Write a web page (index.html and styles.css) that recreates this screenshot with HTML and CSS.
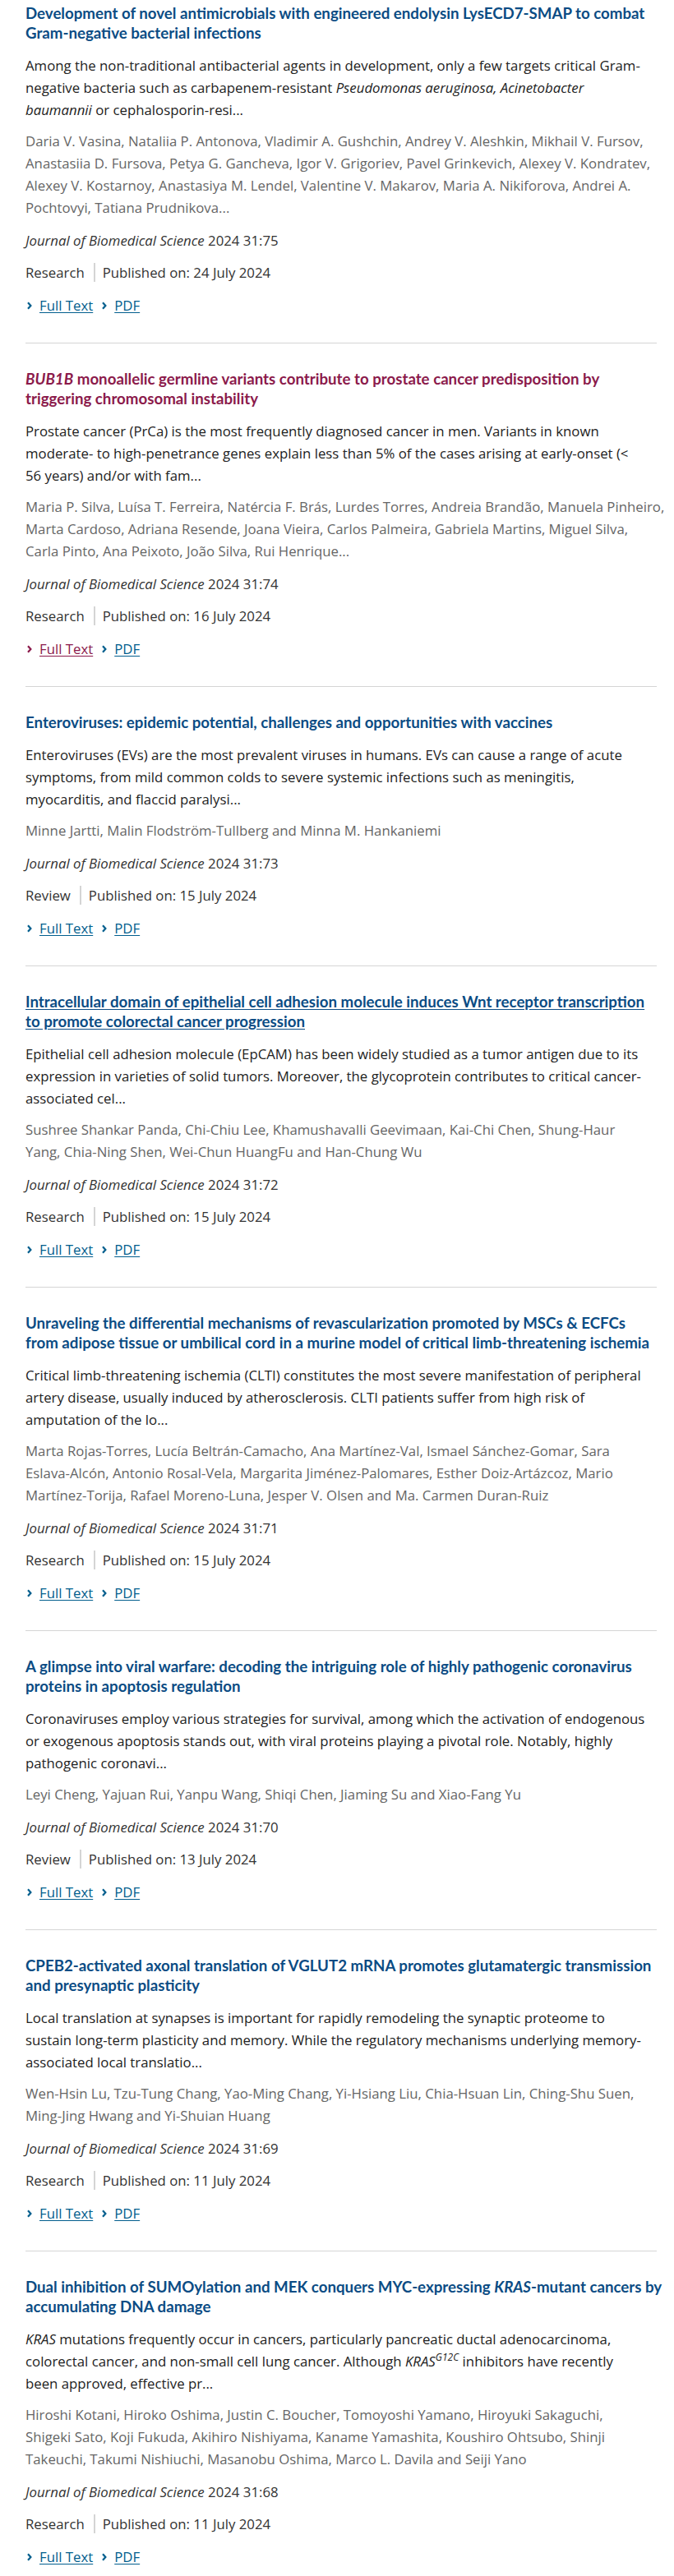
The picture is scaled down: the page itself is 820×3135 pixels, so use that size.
FILE: index.html
```html
<!DOCTYPE html>
<html lang="en">
<head>
<meta charset="utf-8">
<title>Articles</title>
<link rel="stylesheet" href="styles.css">
</head>
<body>
<ol class="results">
  <li class="item">
    <h3 class="title"><a href="#">Development of novel antimicrobials with engineered endolysin LysECD7-SMAP to combat<br>Gram-negative bacterial infections</a></h3>
    <p class="abstract">Among the non-traditional antibacterial agents in development, only a few targets critical Gram-<br>negative bacteria such as carbapenem-resistant <i>Pseudomonas aeruginosa, Acinetobacter<br>baumannii</i> or cephalosporin-resi...</p>
    <p class="authors">Daria V. Vasina, Nataliia P. Antonova, Vladimir A. Gushchin, Andrey V. Aleshkin, Mikhail V. Fursov,<br>Anastasiia D. Fursova, Petya G. Gancheva, Igor V. Grigoriev, Pavel Grinkevich, Alexey V. Kondratev,<br>Alexey V. Kostarnoy, Anastasiya M. Lendel, Valentine V. Makarov, Maria A. Nikiforova, Andrei A.<br>Pochtovyi, Tatiana Prudnikova...</p>
    <p class="journal"><i>Journal of Biomedical Science</i> 2024 31:75</p>
    <div class="meta"><span class="type">Research</span><span class="sep"></span><span class="date">Published on: 24 July 2024</span></div>
    <div class="links">
      <a class="link" href="#"><svg viewBox="0 0 9 10" width="9" height="10"><path d="M3 1.2 6.4 5 3 8.8"/></svg><span>Full Text</span></a>
      <a class="link" href="#"><svg viewBox="0 0 9 10" width="9" height="10"><path d="M3 1.2 6.4 5 3 8.8"/></svg><span>PDF</span></a>
    </div>
  </li>
  <li class="item">
    <h3 class="title"><a class="visited" href="#"><i>BUB1B</i> monoallelic germline variants contribute to prostate cancer predisposition by<br>triggering chromosomal instability</a></h3>
    <p class="abstract">Prostate cancer (PrCa) is the most frequently diagnosed cancer in men. Variants in known<br>moderate- to high-penetrance genes explain less than 5% of the cases arising at early-onset (&lt;<br>56 years) and/or with fam...</p>
    <p class="authors">Maria P. Silva, Luísa T. Ferreira, Natércia F. Brás, Lurdes Torres, Andreia Brandão, Manuela Pinheiro,<br>Marta Cardoso, Adriana Resende, Joana Vieira, Carlos Palmeira, Gabriela Martins, Miguel Silva,<br>Carla Pinto, Ana Peixoto, João Silva, Rui Henrique...</p>
    <p class="journal"><i>Journal of Biomedical Science</i> 2024 31:74</p>
    <div class="meta"><span class="type">Research</span><span class="sep"></span><span class="date">Published on: 16 July 2024</span></div>
    <div class="links">
      <a class="link visited" href="#"><svg viewBox="0 0 9 10" width="9" height="10"><path d="M3 1.2 6.4 5 3 8.8"/></svg><span>Full Text</span></a>
      <a class="link" href="#"><svg viewBox="0 0 9 10" width="9" height="10"><path d="M3 1.2 6.4 5 3 8.8"/></svg><span>PDF</span></a>
    </div>
  </li>
  <li class="item">
    <h3 class="title"><a href="#">Enteroviruses: epidemic potential, challenges and opportunities with vaccines</a></h3>
    <p class="abstract">Enteroviruses (EVs) are the most prevalent viruses in humans. EVs can cause a range of acute<br>symptoms, from mild common colds to severe systemic infections such as meningitis,<br>myocarditis, and flaccid paralysi...</p>
    <p class="authors">Minne Jartti, Malin Flodström-Tullberg and Minna M. Hankaniemi</p>
    <p class="journal"><i>Journal of Biomedical Science</i> 2024 31:73</p>
    <div class="meta"><span class="type">Review</span><span class="sep"></span><span class="date">Published on: 15 July 2024</span></div>
    <div class="links">
      <a class="link" href="#"><svg viewBox="0 0 9 10" width="9" height="10"><path d="M3 1.2 6.4 5 3 8.8"/></svg><span>Full Text</span></a>
      <a class="link" href="#"><svg viewBox="0 0 9 10" width="9" height="10"><path d="M3 1.2 6.4 5 3 8.8"/></svg><span>PDF</span></a>
    </div>
  </li>
  <li class="item">
    <h3 class="title"><a class="hover" href="#">Intracellular domain of epithelial cell adhesion molecule induces Wnt receptor transcription<br>to promote colorectal cancer progression</a></h3>
    <p class="abstract">Epithelial cell adhesion molecule (EpCAM) has been widely studied as a tumor antigen due to its<br>expression in varieties of solid tumors. Moreover, the glycoprotein contributes to critical cancer-<br>associated cel...</p>
    <p class="authors">Sushree Shankar Panda, Chi-Chiu Lee, Khamushavalli Geevimaan, Kai-Chi Chen, Shung-Haur<br>Yang, Chia-Ning Shen, Wei-Chun HuangFu and Han-Chung Wu</p>
    <p class="journal"><i>Journal of Biomedical Science</i> 2024 31:72</p>
    <div class="meta"><span class="type">Research</span><span class="sep"></span><span class="date">Published on: 15 July 2024</span></div>
    <div class="links">
      <a class="link" href="#"><svg viewBox="0 0 9 10" width="9" height="10"><path d="M3 1.2 6.4 5 3 8.8"/></svg><span>Full Text</span></a>
      <a class="link" href="#"><svg viewBox="0 0 9 10" width="9" height="10"><path d="M3 1.2 6.4 5 3 8.8"/></svg><span>PDF</span></a>
    </div>
  </li>
  <li class="item">
    <h3 class="title"><a href="#">Unraveling the differential mechanisms of revascularization promoted by MSCs &amp; ECFCs<br>from adipose tissue or umbilical cord in a murine model of critical limb-threatening ischemia</a></h3>
    <p class="abstract">Critical limb-threatening ischemia (CLTI) constitutes the most severe manifestation of peripheral<br>artery disease, usually induced by atherosclerosis. CLTI patients suffer from high risk of<br>amputation of the lo...</p>
    <p class="authors">Marta Rojas-Torres, Lucía Beltrán-Camacho, Ana Martínez-Val, Ismael Sánchez-Gomar, Sara<br>Eslava-Alcón, Antonio Rosal-Vela, Margarita Jiménez-Palomares, Esther Doiz-Artázcoz, Mario<br>Martínez-Torija, Rafael Moreno-Luna, Jesper V. Olsen and Ma. Carmen Duran-Ruiz</p>
    <p class="journal"><i>Journal of Biomedical Science</i> 2024 31:71</p>
    <div class="meta"><span class="type">Research</span><span class="sep"></span><span class="date">Published on: 15 July 2024</span></div>
    <div class="links">
      <a class="link" href="#"><svg viewBox="0 0 9 10" width="9" height="10"><path d="M3 1.2 6.4 5 3 8.8"/></svg><span>Full Text</span></a>
      <a class="link" href="#"><svg viewBox="0 0 9 10" width="9" height="10"><path d="M3 1.2 6.4 5 3 8.8"/></svg><span>PDF</span></a>
    </div>
  </li>
  <li class="item">
    <h3 class="title"><a href="#">A glimpse into viral warfare: decoding the intriguing role of highly pathogenic coronavirus<br>proteins in apoptosis regulation</a></h3>
    <p class="abstract">Coronaviruses employ various strategies for survival, among which the activation of endogenous<br>or exogenous apoptosis stands out, with viral proteins playing a pivotal role. Notably, highly<br>pathogenic coronavi...</p>
    <p class="authors">Leyi Cheng, Yajuan Rui, Yanpu Wang, Shiqi Chen, Jiaming Su and Xiao-Fang Yu</p>
    <p class="journal"><i>Journal of Biomedical Science</i> 2024 31:70</p>
    <div class="meta"><span class="type">Review</span><span class="sep"></span><span class="date">Published on: 13 July 2024</span></div>
    <div class="links">
      <a class="link" href="#"><svg viewBox="0 0 9 10" width="9" height="10"><path d="M3 1.2 6.4 5 3 8.8"/></svg><span>Full Text</span></a>
      <a class="link" href="#"><svg viewBox="0 0 9 10" width="9" height="10"><path d="M3 1.2 6.4 5 3 8.8"/></svg><span>PDF</span></a>
    </div>
  </li>
  <li class="item">
    <h3 class="title"><a href="#">CPEB2-activated axonal translation of VGLUT2 mRNA promotes glutamatergic transmission<br>and presynaptic plasticity</a></h3>
    <p class="abstract">Local translation at synapses is important for rapidly remodeling the synaptic proteome to<br>sustain long-term plasticity and memory. While the regulatory mechanisms underlying memory-<br>associated local translatio...</p>
    <p class="authors">Wen-Hsin Lu, Tzu-Tung Chang, Yao-Ming Chang, Yi-Hsiang Liu, Chia-Hsuan Lin, Ching-Shu Suen,<br>Ming-Jing Hwang and Yi-Shuian Huang</p>
    <p class="journal"><i>Journal of Biomedical Science</i> 2024 31:69</p>
    <div class="meta"><span class="type">Research</span><span class="sep"></span><span class="date">Published on: 11 July 2024</span></div>
    <div class="links">
      <a class="link" href="#"><svg viewBox="0 0 9 10" width="9" height="10"><path d="M3 1.2 6.4 5 3 8.8"/></svg><span>Full Text</span></a>
      <a class="link" href="#"><svg viewBox="0 0 9 10" width="9" height="10"><path d="M3 1.2 6.4 5 3 8.8"/></svg><span>PDF</span></a>
    </div>
  </li>
  <li class="item">
    <h3 class="title"><a href="#">Dual inhibition of SUMOylation and MEK conquers MYC-expressing <i>KRAS</i>-mutant cancers by<br>accumulating DNA damage</a></h3>
    <p class="abstract"><i>KRAS</i> mutations frequently occur in cancers, particularly pancreatic ductal adenocarcinoma,<br>colorectal cancer, and non-small cell lung cancer. Although <i>KRAS</i><sup><i>G12C</i></sup> inhibitors have recently<br>been approved, effective pr...</p>
    <p class="authors">Hiroshi Kotani, Hiroko Oshima, Justin C. Boucher, Tomoyoshi Yamano, Hiroyuki Sakaguchi,<br>Shigeki Sato, Koji Fukuda, Akihiro Nishiyama, Kaname Yamashita, Koushiro Ohtsubo, Shinji<br>Takeuchi, Takumi Nishiuchi, Masanobu Oshima, Marco L. Davila and Seiji Yano</p>
    <p class="journal"><i>Journal of Biomedical Science</i> 2024 31:68</p>
    <div class="meta"><span class="type">Research</span><span class="sep"></span><span class="date">Published on: 11 July 2024</span></div>
    <div class="links">
      <a class="link" href="#"><svg viewBox="0 0 9 10" width="9" height="10"><path d="M3 1.2 6.4 5 3 8.8"/></svg><span>Full Text</span></a>
      <a class="link" href="#"><svg viewBox="0 0 9 10" width="9" height="10"><path d="M3 1.2 6.4 5 3 8.8"/></svg><span>PDF</span></a>
    </div>
  </li>
</ol>
</body>
</html>
```
FILE: styles.css
```css
html, body {
  margin: 0;
  padding: 0;
  background: #fff;
}
body {
  font-family: "Open Sans", "Liberation Sans", sans-serif;
  font-size: 16.8px;
  line-height: 27px;
  color: #222;
}
.results {
  list-style: none;
  margin: 0;
  padding: 0 21px 0 31px;
}
.item {
  padding: 31px 0 32px;
  border-bottom: 1px solid #d5d5d5;
}
.item:first-child {
  padding-top: 4px;
}
.item:last-child {
  border-bottom: none;
  padding-bottom: 10px;
}
.title {
  margin: 0;
  font-family: Lato, "Open Sans", sans-serif;
  font-weight: 700;
  font-size: 18.7px;
  line-height: 24px;
  white-space: nowrap;
}
.title a {
  color: #0b4c84;
  text-decoration: none;
}
.title a.visited {
  color: #8b1a4b;
}
.title a.hover {
  text-decoration: underline;
  text-underline-offset: 2px;
}
.abstract {
  margin: 14px 0 0;
  color: #222;
  white-space: nowrap;
}
.abstract sup {
  font-size: 12px;
  line-height: 0;
}
.authors {
  margin: 11px 0 0;
  color: #666;
  white-space: nowrap;
}
.journal {
  margin: 13px 0 0;
  color: #333;
}
.meta {
  margin: 12px 0 0;
  display: flex;
  align-items: center;
  color: #333;
}
.sep {
  width: 2px;
  height: 23px;
  background: #d5d5d5;
  margin: 0 9px 0 11px;
}
.links {
  margin: 13px 0 0;
  display: flex;
  gap: 9px;
}
.link {
  display: inline-flex;
  align-items: center;
  gap: 8px;
  color: #025e8d;
  text-decoration: none;
}
.link span {
  text-decoration: underline;
  text-underline-offset: 2px;
}
.link svg path {
  fill: none;
  stroke: currentColor;
  stroke-width: 2.2;
}
.link.visited {
  color: #8b1a4b;
}
```
